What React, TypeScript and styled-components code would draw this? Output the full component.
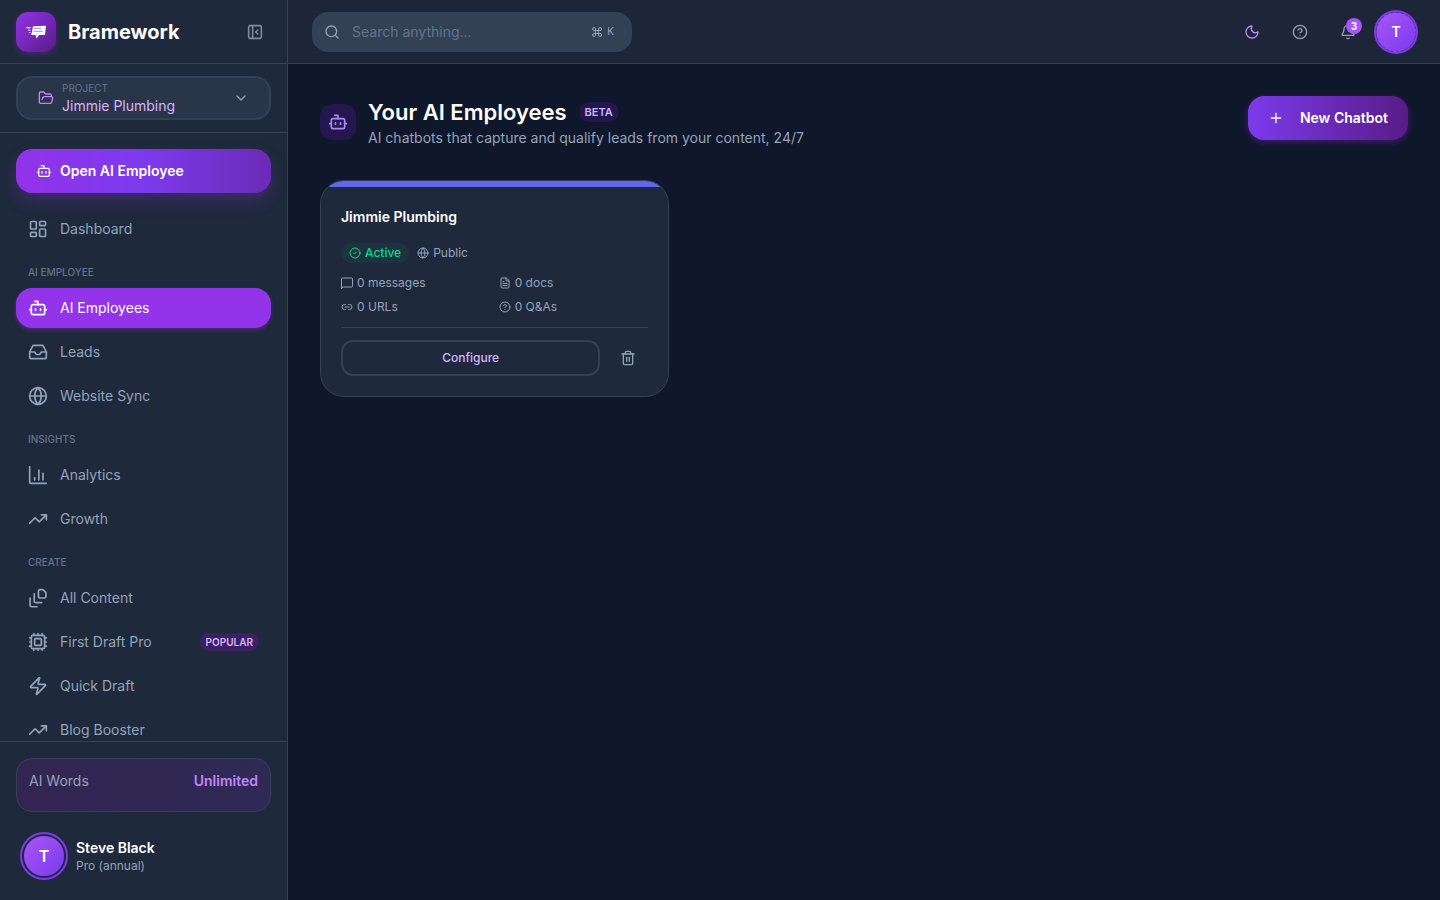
import React from "react";
import styled, { createGlobalStyle, css } from "styled-components";
import {
  Bot, LayoutDashboard, Inbox, Globe, TrendingUp, Zap, FolderOpen, ChevronDown, Search, Command,
  Moon, Bell, Plus, Trash2, Link2, FileText, CircleCheck, CircleHelp, Cpu,
} from "lucide-react";

const ui = '"Inter", "Liberation Sans", sans-serif';

const Global = createGlobalStyle`
  *, *::before, *::after { box-sizing: border-box; }
  body { margin: 0; background: #0f172a; color: #94a3b8; font-family: ${ui}; font-size: 14px; line-height: 20px; }
  button, input { font: inherit; color: inherit; margin: 0; padding: 0; border: 0; background: none; }
  button { cursor: pointer; }
  a { color: inherit; text-decoration: none; }
  h1, h2, h3, p, ul { margin: 0; padding: 0; }
  ul { list-style: none; }
  svg { display: block; flex: none; }
`;

const Shell = styled.div`
  display: grid;
  grid-template-columns: 288px minmax(0, 1fr);
  height: 100vh;
`;

const Sidebar = styled.aside`
  display: flex;
  flex-direction: column;
  min-height: 0;
  background: #1e293b;
  border-right: 1px solid #334155;
`;

const Brand = styled.div`
  display: flex;
  align-items: center;
  gap: 12px;
  height: 64px;
  flex: none;
  padding: 0 16px;
  border-bottom: 1px solid #334155;
`;

const Logo = styled.span`
  display: grid;
  place-items: center;
  width: 40px;
  height: 40px;
  border-radius: 12px;
  background: linear-gradient(135deg, #9333ea, #581c87);
  box-shadow: 0 2px 6px rgba(147, 51, 234, 0.3);
`;

const BrandName = styled.span`
  flex: 1;
  color: #fff;
  font-size: 20px;
  line-height: 28px;
  font-weight: 700;
`;

const IconButton = styled.button<{ $size?: number; $tone?: string }>`
  position: relative;
  display: grid;
  place-items: center;
  flex: none;
  width: ${(p) => p.$size ?? 40}px;
  height: ${(p) => p.$size ?? 40}px;
  border-radius: 12px;
  color: ${(p) => p.$tone ?? "#94a3b8"};
`;

const ProjectArea = styled.div`
  flex: none;
  padding: 12px 16px;
  border-bottom: 1px solid #334155;
`;

const ProjectButton = styled.button`
  display: flex;
  align-items: center;
  gap: 8px;
  width: 100%;
  height: 44px;
  padding: 0 20px;
  border: 2px solid #334155;
  border-radius: 16px;
  background: #293548;
  color: #c084fc;
  text-align: left;
`;

const ProjectText = styled.span`
  display: flex;
  flex-direction: column;
  flex: 1;
  color: #d8b4fe;
  line-height: 20px;
`;

const ProjectLabel = styled.small`
  color: #64748b;
  font-size: 10px;
  line-height: 15px;
`;

const Chevron = styled(ChevronDown)`
  color: #94a3b8;
`;

const NavArea = styled.nav`
  flex: 1;
  min-height: 0;
  overflow: hidden;
  padding: 16px 16px 0;
`;

const gradientButton = css`
  display: flex;
  align-items: center;
  height: 44px;
  padding: 0 20px;
  border-radius: 16px;
  color: #fff;
  font-weight: 600;
`;

const OpenButton = styled.button`
  ${gradientButton}
  gap: 8px;
  width: 100%;
  margin-bottom: 16px;
  background: linear-gradient(90deg, #9333ea, #7c3aed 50%, #6b2bb5);
  box-shadow: 0 8px 16px rgba(147, 51, 234, 0.25);
`;

const NavList = styled.ul`
  display: grid;
  gap: 4px;
`;

const NavHeading = styled.h3`
  padding: 16px 12px 8px;
  color: #64748b;
  font-size: 10px;
  line-height: 15px;
  font-weight: 500;
`;

const NavLink = styled.a<{ $active?: boolean }>`
  display: flex;
  align-items: center;
  gap: 12px;
  height: 40px;
  padding: 0 12px;
  border-radius: 16px;
  ${(p) => p.$active && css`
    background: #9333ea;
    color: #fff;
    box-shadow: 0 2px 4px rgba(147, 51, 234, 0.35);
  `}
`;

const NavText = styled.span`
  flex: 1;
`;

const Pill = styled.span<{ $small?: boolean }>`
  padding: 0 6px;
  border-radius: 10px;
  background: ${(p) => (p.$small ? "#3b2063" : "#23174d")};
  color: ${(p) => (p.$small ? "#d8b4fe" : "#c4b5fd")};
  font-size: ${(p) => (p.$small ? 10 : 11)}px;
  line-height: ${(p) => (p.$small ? 18 : 20)}px;
  font-weight: 600;
`;

const SidebarFooter = styled.footer`
  flex: none;
  padding: 16px 16px 12px;
  border-top: 1px solid #334155;
`;

const WordsCard = styled.div`
  display: flex;
  justify-content: space-between;
  height: 54px;
  padding: 12px;
  border: 1px solid #334155;
  border-radius: 16px;
  background: linear-gradient(90deg, #332552, #2e2a55);
`;

const WordsValue = styled.strong`
  color: #c084fc;
  font-weight: 600;
`;

const Profile = styled.button`
  display: flex;
  align-items: center;
  gap: 12px;
  width: 100%;
  margin-top: 12px;
  padding: 12px 8px;
  text-align: left;
`;

const Avatar = styled.span`
  display: grid;
  place-items: center;
  flex: none;
  width: 40px;
  height: 40px;
  border-radius: 50%;
  background: linear-gradient(135deg, #a855f7, #7c3aed);
  color: #fff;
  font-size: 16px;
  font-weight: 600;
  box-shadow: 0 0 0 2px #1e293b, 0 0 0 4px #7c3aed;
`;

const ProfileText = styled.span`
  display: flex;
  flex-direction: column;
  font-size: 12px;
  line-height: 16px;
`;

const ProfileName = styled.strong`
  color: #fff;
  font-size: 14px;
  line-height: 20px;
  font-weight: 600;
`;

const Page = styled.div`
  display: flex;
  flex-direction: column;
  min-width: 0;
`;

const TopBar = styled.header`
  display: flex;
  align-items: center;
  justify-content: space-between;
  height: 64px;
  flex: none;
  padding: 0 24px;
  background: #1d2638;
  border-bottom: 1px solid #334155;
`;

const SearchBox = styled.label`
  display: flex;
  align-items: center;
  gap: 12px;
  width: 320px;
  height: 40px;
  padding: 0 18px 0 12px;
  border-radius: 16px;
  background: #334155;
`;

const SearchInput = styled.input`
  flex: 1;
  min-width: 0;
  outline: 0;
  &::placeholder { color: #64748b; opacity: 1; }
`;

const Shortcut = styled.kbd`
  display: flex;
  align-items: flex-start;
  gap: 4px;
  font-family: ${ui};
  font-size: 10px;
  line-height: 10px;
`;

const Actions = styled.div`
  display: flex;
  align-items: center;
  gap: 8px;
`;

const Count = styled.span`
  position: absolute;
  top: 6px;
  right: 6px;
  width: 16px;
  height: 16px;
  border-radius: 50%;
  background: #a855f7;
  color: #fff;
  font-size: 10px;
  line-height: 16px;
  font-weight: 700;
`;

const AvatarButton = styled.button`
  display: grid;
  place-items: center;
  width: 40px;
  height: 40px;
  border: 1px dashed #6d3fb4;
  border-radius: 50%;
  background: linear-gradient(135deg, #a855f7, #7c3aed);
  box-shadow: 0 0 0 2px #7c3aed;
  color: #fff;
  font-weight: 600;
`;

const Main = styled.main`
  display: grid;
  gap: 32px;
  padding: 32px;
`;

const PageHead = styled.div`
  display: flex;
  align-items: flex-start;
  gap: 12px;
`;

const HeadIcon = styled.span`
  display: grid;
  place-items: center;
  width: 36px;
  height: 36px;
  margin-top: 8px;
  border-radius: 12px;
  background: #23174d;
  color: #a78bfa;
`;

const HeadText = styled.div`
  flex: 1;
`;

const TitleRow = styled.div`
  display: flex;
  align-items: center;
  gap: 12px;
`;

const Title = styled.h1`
  color: #fff;
  font-size: 22px;
  line-height: 32px;
  font-weight: 600;
`;

const NewButton = styled.button`
  ${gradientButton}
  gap: 16px;
  background: linear-gradient(90deg, #7c3aed, #581c87);
  box-shadow: 0 2px 6px rgba(147, 51, 234, 0.35);
`;

const Cards = styled.div`
  display: grid;
  grid-template-columns: repeat(3, minmax(0, 1fr));
  gap: 20px;
`;

const Card = styled.article`
  overflow: hidden;
  border: 1px solid #334155;
  border-radius: 24px;
  background: #1e293b;
`;

const CardStripe = styled.div`
  height: 6px;
  background: #6366f1;
`;

const CardBody = styled.div`
  padding: 20px;
`;

const CardTitle = styled.h2`
  color: #fff;
  font-size: 14px;
  line-height: 20px;
  font-weight: 600;
`;

const Tags = styled.div`
  display: flex;
  gap: 8px;
  margin: 16px 0 10px;
  font-size: 12px;
`;

const Tag = styled.span<{ $active?: boolean }>`
  display: flex;
  align-items: center;
  gap: 4px;
  border-radius: 10px;
  ${(p) => p.$active && css`
    padding: 0 8px;
    background: #1c343f;
    color: #10d690;
    font-weight: 500;
  `}
`;

const Stats = styled.ul`
  display: grid;
  grid-template-columns: 1fr 1fr;
  gap: 4px 8px;
  padding-bottom: 10px;
  border-bottom: 1px solid #334155;
  font-size: 12px;
`;

const Stat = styled.li`
  display: flex;
  align-items: center;
  gap: 4px;
`;

const CardActions = styled.div`
  display: flex;
  align-items: center;
  gap: 8px;
  height: 48px;
  padding-top: 12px;
`;

const Configure = styled.button`
  flex: 1;
  height: 36px;
  border: 2px solid #334155;
  border-radius: 12px;
  color: #d8b4fe;
  font-size: 12px;
  font-weight: 500;
`;

type GlyphProps = { size?: number; strokeWidth?: number };

const glyph = (size: number, strokeWidth = 2) => ({
  width: size, height: size, viewBox: "0 0 24 24", fill: "none", stroke: "currentColor",
  strokeWidth, strokeLinecap: "round" as const, strokeLinejoin: "round" as const,
});

const CollapseIcon = () => (
  <svg {...glyph(16, 2.4)}>
    <rect x="2.500" y="2.500" width="19" height="19" rx="2" />
    <path d="M8.500 2.500v19M16 9l-3 3 3 3" />
  </svg>
);

const AnalyticsIcon = ({ size = 20 }: GlyphProps) => (
  <svg {...glyph(size)}>
    <path d="M2 2v18a2 2 0 0 0 2 2h18M8 18v-3M13 18V6M18 18V10" />
  </svg>
);

const FilesIcon = ({ size = 20 }: GlyphProps) => (
  <svg {...glyph(size)}>
    <path d="M12.500 4a2 2 0 0 1 2-2H18l3.500 3.500V10a2 2 0 0 1-2 2h-5a2 2 0 0 1-2-2z" />
    <path d="M7.500 7v8.500a2 2 0 0 0 2 2h7" />
    <path d="M2.500 12v8.500a2 2 0 0 0 2 2H11" />
  </svg>
);

const MessageIcon = () => (
  <svg {...glyph(12)}>
    <path d="M1 23V4a2 2 0 0 1 2-2h18a2 2 0 0 1 2 2v14a2 2 0 0 1-2 2H4z" />
  </svg>
);

const BrandMark = () => (
  <svg width="22" height="14" viewBox="0 0 22 14" fill="#fff">
    <path d="M8 1.200 21 .8 20 10h-6l-2.500 3.500L10.500 10H6.300z" />
    <path d="M1 2h5v1.200H1zM3 4.500h2.500v1.200H3zM4 7h1.500v1.200H4z" opacity=".8" />
    <path d="M9 3.300h7M8.500 6.300h9" stroke="#a882d8" strokeWidth="1" />
  </svg>
);

type Item = { label: string; icon: React.ComponentType<GlyphProps>; active?: boolean; badge?: string };
const groups: { title?: string; items: Item[] }[] = [
  { items: [{ label: "Dashboard", icon: LayoutDashboard }] },
  { title: "AI EMPLOYEE", items: [
    { label: "AI Employees", icon: Bot, active: true },
    { label: "Leads", icon: Inbox },
    { label: "Website Sync", icon: Globe },
  ] },
  { title: "INSIGHTS", items: [
    { label: "Analytics", icon: AnalyticsIcon },
    { label: "Growth", icon: TrendingUp },
  ] },
  { title: "CREATE", items: [
    { label: "All Content", icon: FilesIcon },
    { label: "First Draft Pro", icon: Cpu, badge: "POPULAR" },
    { label: "Quick Draft", icon: Zap },
    { label: "Blog Booster", icon: TrendingUp },
  ] },
];

export default function App() {
  return (
    <>
      <Global />
      <Shell>
        <Sidebar>
          <Brand>
            <Logo><BrandMark /></Logo>
            <BrandName>Bramework</BrandName>
            <IconButton $size={32} $tone="#7d8ca1" aria-label="Collapse sidebar"><CollapseIcon /></IconButton>
          </Brand>
          <ProjectArea>
            <ProjectButton>
              <FolderOpen size={16} />
              <ProjectText>
                <ProjectLabel>PROJECT</ProjectLabel>
                Jimmie Plumbing
              </ProjectText>
              <Chevron size={16} />
            </ProjectButton>
          </ProjectArea>
          <NavArea>
            <OpenButton><Bot size={16} />Open AI Employee</OpenButton>
            {groups.map((g, i) => (
              <section key={i}>
                {g.title && <NavHeading>{g.title}</NavHeading>}
                <NavList>
                  {g.items.map(({ label, icon: Icon, active, badge }) => (
                    <li key={label}>
                      <NavLink href="#" $active={active}>
                        <Icon size={20} />
                        <NavText>{label}</NavText>
                        {badge && <Pill $small>{badge}</Pill>}
                      </NavLink>
                    </li>
                  ))}
                </NavList>
              </section>
            ))}
          </NavArea>
          <SidebarFooter>
            <WordsCard><span>AI Words</span><WordsValue>Unlimited</WordsValue></WordsCard>
            <Profile>
              <Avatar>T</Avatar>
              <ProfileText><ProfileName>Steve Black</ProfileName>Pro (annual)</ProfileText>
            </Profile>
          </SidebarFooter>
        </Sidebar>
        <Page>
          <TopBar>
            <SearchBox>
              <Search size={16} />
              <SearchInput type="search" aria-label="Search" placeholder="Search anything..." />
              <Shortcut><Command size={12} />K</Shortcut>
            </SearchBox>
            <Actions>
              <IconButton $tone="#c084fc" aria-label="Toggle theme"><Moon size={16} /></IconButton>
              <IconButton aria-label="Help"><CircleHelp size={16} /></IconButton>
              <IconButton aria-label="Notifications"><Bell size={16} /><Count>3</Count></IconButton>
              <AvatarButton aria-label="Account">T</AvatarButton>
            </Actions>
          </TopBar>
          <Main>
            <PageHead>
              <HeadIcon><Bot size={20} /></HeadIcon>
              <HeadText>
                <TitleRow><Title>Your AI Employees</Title><Pill>BETA</Pill></TitleRow>
                <p>AI chatbots that capture and qualify leads from your content, 24/7</p>
              </HeadText>
              <NewButton><Plus size={16} />New Chatbot</NewButton>
            </PageHead>
            <Cards>
              <Card>
                <CardStripe />
                <CardBody>
                  <CardTitle>Jimmie Plumbing</CardTitle>
                  <Tags>
                    <Tag $active><CircleCheck size={12} />Active</Tag>
                    <Tag><Globe size={12} />Public</Tag>
                  </Tags>
                  <Stats>
                    <Stat><MessageIcon />0 messages</Stat>
                    <Stat><FileText size={12} />0 docs</Stat>
                    <Stat><Link2 size={12} />0 URLs</Stat>
                    <Stat><CircleHelp size={12} />0 Q&amp;As</Stat>
                  </Stats>
                  <CardActions>
                    <Configure>Configure</Configure>
                    <IconButton aria-label="Delete chatbot"><Trash2 size={16} /></IconButton>
                  </CardActions>
                </CardBody>
              </Card>
            </Cards>
          </Main>
        </Page>
      </Shell>
    </>
  );
}
